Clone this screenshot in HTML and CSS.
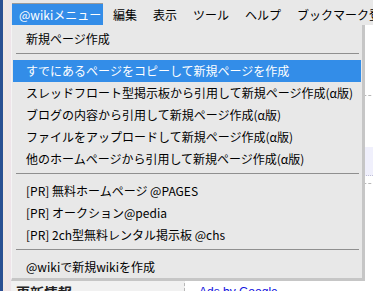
FILE: index.html
```html
<!DOCTYPE html>
<html lang="ja">

<head>
  <meta charset="UTF-8">
  <title>@wiki メニュー</title>
  <link rel="stylesheet" href="styles.css">
</head>

<body>
  <div class="page">
    <div class="edge"></div>

    <div class="main">
      <!-- menu bar -->
      <div class="menubar">
        <span class="menu-top active">@wikiメニュー</span>
        <span class="menu-top">編集</span>
        <span class="menu-top">表示</span>
        <span class="menu-top">ツール</span>
        <span class="menu-top">ヘルプ</span>
        <span class="menu-top">ブックマーク登録</span>
      </div>

      <div class="content">
        <div class="sidebar">
          <h2 class="side-title">更新情報</h2>
        </div>
        <div class="body-area">
          <div class="rule rule-1"></div>
          <div class="notice"></div>
          <div class="rule rule-2"></div>
          <a href="#" class="ads">Ads by Google</a>
        </div>
      </div>
    </div>

    <!-- dropdown -->
    <div class="dropdown">
      <div class="item">新規ページ作成</div>
      <div class="sep"></div>
      <div class="item selected">すでにあるページをコピーして新規ページを作成</div>
      <div class="item">スレッドフロート型掲示板から引用して新規ページ作成(α版)</div>
      <div class="item">ブログの内容から引用して新規ページ作成(α版)</div>
      <div class="item">ファイルをアップロードして新規ページ作成(α版)</div>
      <div class="item">他のホームページから引用して新規ページ作成(α版)</div>
      <div class="sep"></div>
      <div class="item">[PR] 無料ホームページ @PAGES</div>
      <div class="item">[PR] オークション@pedia</div>
      <div class="item">[PR] 2ch型無料レンタル掲示板 @chs</div>
      <div class="sep"></div>
      <div class="item">@wikiで新規wikiを作成</div>
    </div>
  </div>
</body>

</html>
```

FILE: styles.css
```css
/* page */
body {
  margin: 0;
  padding: 0;
  font-family: "Noto Sans CJK JP", "Noto Sans", sans-serif;
  font-size: 12px;
  color: #000;
  background: #fff;
}

.page {
  position: relative;
  display: flex;
  width: 373px;
  height: 291px;
  overflow: hidden;
}

.edge {
  width: 11px;
  flex: none;
  background: linear-gradient(to right, #2d4f92 0, #2d4f92 3px, #f3e6e2 3px, #eee4ea 100%);
}

.main {
  flex: 1;
  display: flex;
  flex-direction: column;
}

/* menu bar */
.menubar {
  height: 25px;
  display: flex;
  align-items: flex-end;
  background: #e8e8e8;
  white-space: nowrap;
}

.menu-top {
  height: 21px;
  line-height: 21px;
  padding: 0 8px;
  font-size: 12px;
}

.menu-top.active {
  width: 77px;
  margin-left: 1px;
  margin-right: 2px;
  padding: 0 7px;
  color: #fff;
  background: #338de8;
  box-shadow: 0 -1px #9a9a9a;
}

/* content below */
.content {
  flex: 1;
  display: flex;
}

.sidebar {
  width: 173px;
  background: #f1f1f1;
  border-right: 1px dashed #b8b8b8;
  display: flex;
  flex-direction: column;
  justify-content: flex-end;
}

.side-title {
  margin: 0 0 -10px 5px;
  font-size: 14px;
  font-weight: bold;
  line-height: 18px;
  color: #222;
}

.body-area {
  flex: 1;
  display: flex;
  flex-direction: column;
}

.rule {
  border-top: 1px dashed #b8b8b8;
}

.rule-1 {
  margin-top: 70px;
}

.notice {
  margin-top: 51px;
  height: 28px;
  background: #f0f0fc;
  border-bottom: 1px dotted #c0c0d8;
}

.rule-2 {
  margin-top: 7px;
}

.ads {
  margin: auto 0 -8px 14px;
  font-family: "Liberation Sans", Arial, sans-serif;
  font-size: 12px;
  line-height: 14px;
  color: #1010e0;
  text-decoration: none;
}

/* dropdown menu */
.dropdown {
  position: absolute;
  left: 11px;
  top: 25px;
  width: 350px;
  padding-top: 3px;
  background: #e8e8e8;
  border-left: 1px solid #f4f4f4;
  border-right: 3px solid #c6c6c6;
  border-bottom: 3px solid #c6c6c6;
}

.item {
  height: 22px;
  line-height: 22px;
  margin: 0 1px;
  padding-left: 13px;
  white-space: nowrap;
}

.item.selected {
  background: #338de8;
  color: #fff;
}

.sep {
  height: 1px;
  margin: 3px 3px 6px 4px;
  background: #8f8f8f;
}
```
